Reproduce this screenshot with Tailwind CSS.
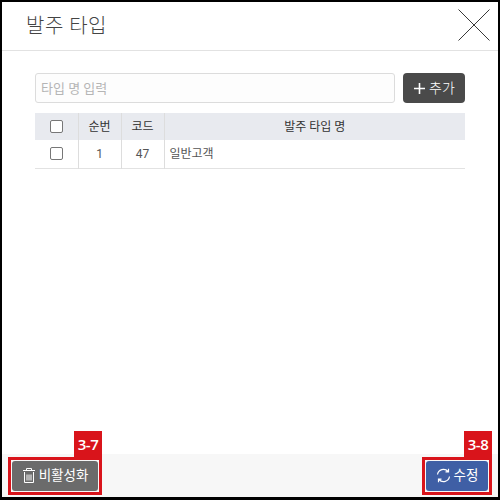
<!DOCTYPE html>
<html lang="ko">
<head>
    <meta charset="UTF-8">
    <title>발주 타입</title>
    <script src="https://cdn.jsdelivr.net/npm/@tailwindcss/browser@4"></script>
</head>
<body class="bg-white">
    <div class="relative w-[500px] h-[500px] flex flex-col bg-white border-2 border-b-[3px] border-black font-['Roboto','Noto_Sans_CJK_KR',sans-serif] text-[#444] overflow-hidden">
        <header class="h-[49px] shrink-0 flex items-center justify-between border-b border-[#e2e2e2] pl-[24px] pr-[8px]">
            <h1 class="text-[20px] font-light text-[#444] tracking-[0.5px]">발주 타입</h1>
            <svg class="w-[32px] h-[32px] mt-[-3px]" viewBox="0 0 32 32" fill="none" stroke="#222" stroke-width="0.9"><path d="M0.5 0.5 31.5 31.5M31.5 0.5 0.5 31.5"/></svg>
        </header>

        <main class="flex-1 pt-[22px] px-[33px]">
            <div class="flex gap-[8px] h-[30px]">
                <input class="flex-1 min-w-0 h-full px-[5px] bg-[#fdfdfd] border border-[#dcdcdc] rounded-[3px] text-[13px] placeholder:text-[#b5b5b5]" placeholder="타입 명 입력">
                <button class="w-[62px] h-full flex items-center justify-center gap-[3px] bg-[#4a4a4a] text-white text-[14px] font-light rounded-[4px]">
                    <svg class="w-[13px] h-[13px]" viewBox="0 0 13 13" stroke="#fff" stroke-width="1.6"><path d="M6.5 1v11M1 6.5h11"/></svg>
                    추가
                </button>
            </div>

            <table class="w-[430px] mt-[10px] table-fixed border-collapse text-[12px] text-[#333]">
                <thead>
                    <tr class="h-[27px] bg-[#e8eaef]">
                        <th class="w-[43px] font-normal border-r border-[#dddddd]"><input type="checkbox" class="block mx-auto w-[13px] h-[13px] appearance-none bg-white border border-[#777] rounded-[2px]"></th>
                        <th class="w-[43px] font-normal border-r border-[#dddddd]">순번</th>
                        <th class="w-[43px] font-normal border-r border-[#dddddd]">코드</th>
                        <th class="font-normal">발주 타입 명</th>
                    </tr>
                </thead>
                <tbody>
                    <tr class="h-[28px] border-b border-[#e2e2e2] text-[#555]">
                        <td class="border-r border-[#dddddd]"><input type="checkbox" class="block mx-auto w-[13px] h-[13px] appearance-none bg-white border border-[#777] rounded-[2px]"></td>
                        <td class="text-center border-r border-[#dddddd]">1</td>
                        <td class="text-center border-r border-[#dddddd]">47</td>
                        <td class="pl-[5px]">일반고객</td>
                    </tr>
                </tbody>
            </table>
        </main>

        <footer class="h-[43px] shrink-0 flex items-center justify-between bg-[#f7f7f7] pl-[10px] pr-[10px]">
            <button class="w-[86px] h-[30px] flex items-center justify-center gap-[3px] bg-[#6b6b6b] text-white text-[13.5px] rounded-[3px]">
                <svg class="w-[14px] h-[17px]" viewBox="0 0 14 17" fill="none" stroke="#fff" stroke-width="1"><path d="M1 3.5h12M4.5 3V1.5h5V3M2.5 5v10.5h9V5M5 7.5v6M7 7.5v6M9 7.5v6"/></svg>
                비활성화
            </button>
            <button class="w-[62px] h-[30px] flex items-center justify-center gap-[3px] bg-[#3f5fa5] text-white text-[13.5px] rounded-[3px]">
                <svg class="w-[15px] h-[15px]" viewBox="0 0 15 15" fill="none" stroke="#fff" stroke-width="1.2"><path d="M1.5 6.5A6 6 0 0 1 12 3.5M13.5 8.5A6 6 0 0 1 3 11.5M12.5 0.8v3h-3M2.5 14.2v-3h3"/></svg>
                수정
            </button>
        </footer>

        <!-- annotations -->
        <div class="absolute left-[6px] top-[455px] w-[94px] h-[38px] border-[3px] border-[#d9141b]"></div>
        <div class="absolute left-[72px] top-[429px] w-[28px] h-[26px] flex items-center justify-center bg-[#d9141b] text-white text-[15px] font-semibold font-['Open_Sans',sans-serif] tracking-[-0.5px]">3-7</div>
        <div class="absolute left-[420px] top-[455px] w-[70px] h-[38px] border-[3px] border-[#d9141b]"></div>
        <div class="absolute left-[462px] top-[429px] w-[28px] h-[26px] flex items-center justify-center bg-[#d9141b] text-white text-[15px] font-semibold font-['Open_Sans',sans-serif] tracking-[-0.5px]">3-8</div>
    </div>
</body>
</html>
